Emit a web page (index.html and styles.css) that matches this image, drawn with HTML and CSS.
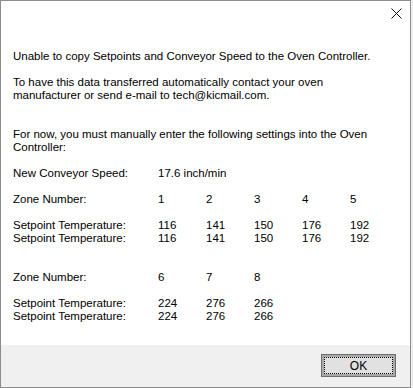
FILE: index.html
```html
<!DOCTYPE html>
<html lang="en">
<head>
    <meta charset="UTF-8">
    <title>Oven Controller</title>
    <link rel="stylesheet" href="styles.css">
</head>
<body>
    <div class="window">
        <div class="titlebar">
            <svg class="close-icon" width="11" height="11" viewBox="0 0 11 11">
                <path d="M0.5 0.5 L10.5 10.5 M10.5 0.5 L0.5 10.5" stroke="#111" stroke-width="1" fill="none"/>
            </svg>
        </div>

        <div class="content">
            <p class="line">Unable to copy Setpoints and Conveyor Speed to the Oven Controller.</p>

            <p class="block">To have this data transferred automatically contact your oven<br>manufacturer or send e-mail to tech@kicmail.com.</p>

            <p class="block gap2">For now, you must manually enter the following settings into the Oven<br>Controller:</p>

            <div class="row block">
                <span>New Conveyor Speed:</span><span class="wide">17.6 inch/min</span>
            </div>

            <!-- zones 1-5 -->
            <div class="row block">
                <span>Zone Number:</span><span>1</span><span>2</span><span>3</span><span>4</span><span>5</span>
            </div>
            <div class="row block">
                <span>Setpoint Temperature:</span><span>116</span><span>141</span><span>150</span><span>176</span><span>192</span>
            </div>
            <div class="row">
                <span>Setpoint Temperature:</span><span>116</span><span>141</span><span>150</span><span>176</span><span>192</span>
            </div>

            <!-- zones 6-8 -->
            <div class="row block gap2">
                <span>Zone Number:</span><span>6</span><span>7</span><span>8</span>
            </div>
            <div class="row block">
                <span>Setpoint Temperature:</span><span>224</span><span>276</span><span>266</span>
            </div>
            <div class="row">
                <span>Setpoint Temperature:</span><span>224</span><span>276</span><span>266</span>
            </div>
        </div>

        <div class="footer">
            <button class="ok-button"><span class="focus">OK</span></button>
        </div>
    </div>
</body>
</html>
```

FILE: styles.css
```css
body {
    margin: 0;
    padding: 0;
    background: #f0f0f0;
    font-family: 'Liberation Sans', Arial, sans-serif;
    font-size: 11.5px;
    color: #000;
}
.window {
    width: 409px;
    height: 386px;
    border: 1px solid #8c8c8c;
    background: #fff;
    display: flex;
    flex-direction: column;
}
.titlebar {
    height: 30px;
    box-sizing: border-box;
    padding: 7px 8px 0 0;
    display: flex;
    justify-content: flex-end;
    align-items: flex-start;
}
.content {
    flex-grow: 1;
    padding: 19px 12px 0 12px;
    line-height: 13px;
}
.line {
    margin: 0;
}
.block {
    margin: 13px 0 0 0;
}
.gap2 {
    margin-top: 26px;
}
.row {
    display: grid;
    grid-template-columns: 145px repeat(5, 48px);
    white-space: nowrap;
}
.row .wide {
    grid-column: span 5;
}
.footer {
    height: 42px;
    box-sizing: border-box;
    background: #f0f0f0;
    padding: 9px 14px 0 0;
    display: flex;
    justify-content: flex-end;
    align-items: flex-start;
}
.ok-button {
    width: 75px;
    height: 23px;
    margin: 0;
    padding: 2px;
    border: 1px solid #6f6f6f;
    box-shadow: inset 0 0 0 2px #a9a9a9;
    background: #e1e1e1;
    font-family: inherit;
    font-size: 12px;
    color: #000;
    display: flex;
}
.ok-button .focus {
    flex-grow: 1;
    border: 1px dotted #000;
    display: flex;
    align-items: center;
    justify-content: center;
}
```
